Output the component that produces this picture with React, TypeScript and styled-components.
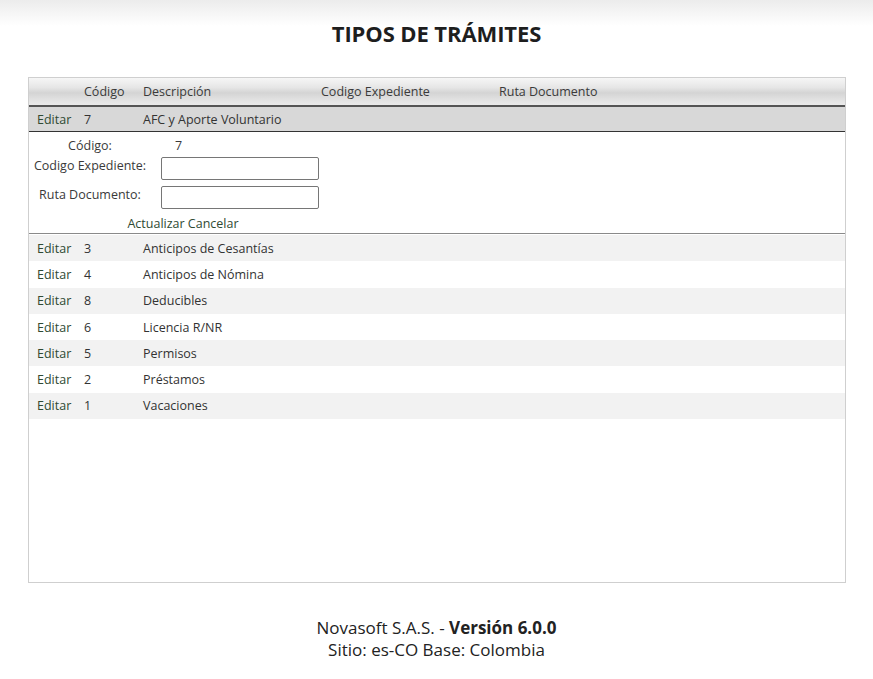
import React from "react";
import styled, { createGlobalStyle } from "styled-components";

const Global = createGlobalStyle`
  html, body { margin: 0; padding: 0; }
  body {
    font-family: "Open Sans", "Noto Sans", sans-serif;
    color: #333;
    background: linear-gradient(to bottom, #ececec 0px, #ffffff 26px) no-repeat #fff;
    min-height: 679px;
  }
`;

const Page = styled.div`
  width: 873px;
  display: flex;
  flex-direction: column;
  align-items: stretch;
`;

const Title = styled.h1`
  margin: 19px 0 0 0;
  height: 28px;
  line-height: 28px;
  text-align: center;
  font-size: 22px;
  font-weight: 700;
  color: #1e1e1e;
  letter-spacing: -0.1px;
`;

const Panel = styled.div`
  margin: 30px 0 0 28px;
  width: 816px;
  height: 504px;
  border: 1px solid #cfcfcf;
  background: #fff;
  display: flex;
  flex-direction: column;
`;

const cols = "47px 59px 178px 178px 1fr";

const HeaderRow = styled.div`
  display: grid;
  grid-template-columns: ${cols};
  height: 27px;
  align-items: center;
  background: linear-gradient(to bottom, #f6f6f6 0%, #e6e6e6 35%, #d4d4d4 55%, #e4e4e4 85%, #eaeaea 100%);
  border-bottom: 2px solid #555;
  font-size: 12.5px;
  color: #3a3a3a;
`;

const Cell = styled.div`
  padding-left: 8px;
  white-space: nowrap;
`;

const EditingRow = styled.div`
  display: grid;
  grid-template-columns: ${cols};
  height: 24px;
  align-items: center;
  background: #d8d8d8;
  border-bottom: 1px solid #333;
  font-size: 12.5px;
  color: #333;
`;

const LinkText = styled.span`
  color: #2f4a33;
  cursor: pointer;
`;

const Form = styled.div`
  display: grid;
  grid-template-columns: 120px 170px;
  grid-auto-rows: auto;
  padding: 5px 0 0 1px;
  height: 96px;
  border-bottom: 1px solid #8a8a8a;
  font-size: 12.5px;
  color: #3a3a3a;
`;

const Label = styled.div<{ $h: number; $top?: number }>`
  height: ${(p) => p.$h}px;
  box-sizing: border-box;
  padding-top: ${(p) => p.$top ?? 0}px;
  display: flex;
  align-items: ${(p) => (p.$top !== undefined ? "flex-start" : "center")};
  justify-content: center;
  white-space: nowrap;
`;

const Value = styled.div<{ $h: number; $pad?: number }>`
  height: ${(p) => p.$h}px;
  display: flex;
  align-items: center;
  padding-left: ${(p) => p.$pad ?? 11}px;
`;

const Input = styled.input`
  box-sizing: border-box;
  width: 158px;
  height: 23px;
  border: 1px solid #767676;
  border-radius: 2px;
  padding: 0 4px;
  font-family: inherit;
  font-size: 12.5px;
  background: #fff;
`;

const Actions = styled.div`
  grid-column: 1 / span 2;
  text-align: center;
  padding-left: 16px;
  height: 24px;
  line-height: 24px;
`;

const Body = styled.div`
  padding-top: 1px;
  display: flex;
  flex-direction: column;
`;

const Row = styled.div<{ $alt: boolean }>`
  display: grid;
  grid-template-columns: ${cols};
  height: 26.3px;
  align-items: center;
  background: ${(p) => (p.$alt ? "#f2f2f2" : "#ffffff")};
  font-size: 12.5px;
  color: #333;
`;

const Footer = styled.div`
  margin-top: 34px;
  text-align: center;
  font-size: 17px;
  line-height: 22px;
  color: #222;
  font-family: "Open Sans", "Noto Sans", sans-serif;
`;

const rows = [
  { code: "3", desc: "Anticipos de Cesantías" },
  { code: "4", desc: "Anticipos de Nómina" },
  { code: "8", desc: "Deducibles" },
  { code: "6", desc: "Licencia R/NR" },
  { code: "5", desc: "Permisos" },
  { code: "2", desc: "Préstamos" },
  { code: "1", desc: "Vacaciones" },
];

export default function App() {
  return (
    <Page>
      <Global />
      <Title>TIPOS DE TRÁMITES</Title>
      <Panel>
        <HeaderRow>
          <Cell />
          <Cell>Código</Cell>
          <Cell>Descripción</Cell>
          <Cell>Codigo Expediente</Cell>
          <Cell>Ruta Documento</Cell>
        </HeaderRow>
        <EditingRow>
          <Cell>
            <LinkText>Editar</LinkText>
          </Cell>
          <Cell>7</Cell>
          <Cell>AFC y Aporte Voluntario</Cell>
          <Cell />
          <Cell />
        </EditingRow>
        <Form>
          <Label $h={17}>Código:</Label>
          <Value $h={17} $pad={25}>7</Value>
          <Label $h={29} $top={3}>Codigo Expediente:</Label>
          <Value $h={29}>
            <Input />
          </Value>
          <Label $h={29} $top={3}>Ruta Documento:</Label>
          <Value $h={29}>
            <Input />
          </Value>
          <Actions>
            <LinkText>Actualizar</LinkText> <LinkText>Cancelar</LinkText>
          </Actions>
        </Form>
        <Body>
          {rows.map((r, i) => (
            <Row key={r.code} $alt={i % 2 === 0}>
              <Cell>
                <LinkText>Editar</LinkText>
              </Cell>
              <Cell>{r.code}</Cell>
              <Cell>{r.desc}</Cell>
              <Cell />
              <Cell />
            </Row>
          ))}
        </Body>
      </Panel>
      <Footer>
        <div>
          Novasoft S.A.S. - <b>Versión 6.0.0</b>
        </div>
        <div>Sitio: es-CO Base: Colombia</div>
      </Footer>
    </Page>
  );
}
